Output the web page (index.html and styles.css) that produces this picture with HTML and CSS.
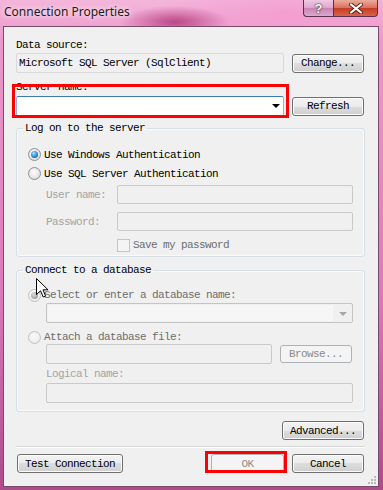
FILE: index.html
```html
<!DOCTYPE html>
<html lang="en">
<head>
  <meta charset="UTF-8">
  <meta name="viewport" content="width=device-width, initial-scale=1.0">
  <title>Connection Properties</title>
  <link rel="stylesheet" href="styles.css">
</head>
<body>
  <div class="window">
    <div class="titlebar">
      <span class="title">Connection Properties</span>
      <div class="caption-btns">
        <span class="cap help">?</span>
        <span class="cap close">
          <svg width="16" height="11" viewBox="0 0 16 11">
            <path d="M3 1.5 L13 9.5 M13 1.5 L3 9.5" stroke="#5a2418" stroke-width="4" stroke-linecap="round"/>
            <path d="M3 1.5 L13 9.5 M13 1.5 L3 9.5" stroke="#fff" stroke-width="2.2" stroke-linecap="round"/>
          </svg>
        </span>
      </div>
    </div>

    <div class="client">
      <div class="label">Data source:</div>
      <div class="row first">
        <div class="textbox readonly wide">Microsoft SQL Server (SqlClient)</div>
        <button class="btn">Change...</button>
      </div>

      <div class="label spaced">Server name:</div>
      <div class="row second">
        <div class="combo active wide"><span class="arrow"></span></div>
        <button class="btn">Refresh</button>
      </div>

      <fieldset class="group logon">
        <legend>Log on to the server</legend>
        <div class="opt">
          <span class="radio checked"></span>
          <span>Use Windows Authentication</span>
        </div>
        <div class="opt">
          <span class="radio"></span>
          <span>Use SQL Server Authentication</span>
        </div>
        <div class="field">
          <span class="field-label">User name:</span>
          <div class="textbox disabled field-box"></div>
        </div>
        <div class="field pass">
          <span class="field-label">Password:</span>
          <div class="textbox disabled field-box"></div>
        </div>
        <div class="check-row">
          <span class="checkbox"></span>
          <span>Save my password</span>
        </div>
      </fieldset>

      <fieldset class="group database">
        <legend>Connect to a database</legend>
        <div class="opt small dim">
          <span class="radio checked disabled"></span>
          <span>Select or enter a database name:</span>
        </div>
        <div class="combo disabled db-combo"><span class="combo-fill"></span><span class="arrow"></span></div>
        <div class="opt small dim attach-opt">
          <span class="radio disabled"></span>
          <span>Attach a database file:</span>
        </div>
        <div class="row indent">
          <div class="textbox disabled file-box"></div>
          <button class="btn disabled browse">Browse...</button>
        </div>
        <div class="label faint indent logical">Logical name:</div>
        <div class="textbox disabled indent logical-box"></div>
      </fieldset>

      <div class="actions">
        <button class="btn advanced">Advanced...</button>
      </div>

      <div class="sep"></div>

      <div class="footer">
        <button class="btn test">Test Connection</button>
        <button class="btn disabled ok">OK</button>
        <button class="btn">Cancel</button>
      </div>

      <!-- annotation boxes + cursor drawn over the dialog -->
      <div class="mark mark-server"></div>
      <div class="mark mark-ok"></div>
      <svg class="cursor" width="13" height="20" viewBox="0 0 13 20">
        <path d="M0.5 0.5 L0.5 16.5 L4.5 12.8 L7.2 19 L9.6 18 L7 11.8 L12 11.8 Z" fill="#fff" stroke="#000" stroke-width="1"/>
      </svg>
      <svg class="grip" width="9" height="9" viewBox="0 0 9 9">
        <rect x="6" y="0" width="2" height="2" fill="#b8b8b8"/>
        <rect x="3" y="3" width="2" height="2" fill="#b8b8b8"/>
        <rect x="6" y="3" width="2" height="2" fill="#b8b8b8"/>
        <rect x="0" y="6" width="2" height="2" fill="#b8b8b8"/>
        <rect x="3" y="6" width="2" height="2" fill="#b8b8b8"/>
        <rect x="6" y="6" width="2" height="2" fill="#b8b8b8"/>
      </svg>
    </div>
  </div>
</body>
</html>
```

FILE: styles.css
```css
* {
  box-sizing: border-box;
}

body {
  margin: 0;
  font-family: "Liberation Mono", "DejaVu Sans Mono", monospace;
  font-size: 11px;
  letter-spacing: -0.6px;
  color: #000;
}

.window {
  width: 383px;
  height: 490px;
  padding: 0 4px 3px 3px;
  display: flex;
  flex-direction: column;
  background:
    radial-gradient(ellipse 55px 16px at 175px 22px, rgba(170, 40, 110, 0.75), transparent),
    radial-gradient(ellipse 140px 30px at 290px 12px, rgba(245, 150, 205, 0.6), transparent),
    linear-gradient(to bottom, #f3b6da 0, #ec98cc 40px, #dc78b8 300px, #b04a8a 100%);
}

.titlebar {
  height: 26px;
  display: flex;
  justify-content: space-between;
  align-items: flex-start;
}

.title {
  font-family: "Noto Sans", sans-serif;
  font-size: 12px;
  letter-spacing: 0;
  line-height: 16px;
  margin: 4px 0 0 1px;
  color: #1c1c1c;
  text-shadow: 0 0 5px rgba(255, 255, 255, 0.9), 0 0 9px rgba(255, 255, 255, 0.6);
}

.caption-btns {
  display: flex;
  margin-right: 1px;
}

.cap {
  height: 17px;
  display: flex;
  align-items: center;
  justify-content: center;
  border: 1px solid #5a2e4e;
  border-top: none;
}

.help {
  width: 30px;
  border-right: none;
  border-radius: 0 0 0 4px;
  background: linear-gradient(#efc8e2, #dca6cc 50%, #c882b2 50%, #dbaacd);
  font-family: "Liberation Sans", sans-serif;
  font-weight: bold;
  font-size: 13px;
  letter-spacing: 0;
  color: #fff;
  text-shadow: 0 0 1px #3a1a30, 0 0 2px #3a1a30;
}

.close {
  width: 45px;
  border-radius: 0 0 4px 0;
  background: linear-gradient(#eaab9c, #d8705c 50%, #c33b22 50%, #d9644a);
}

.client {
  flex: 1;
  position: relative;
  background: #f0f0f0;
  border: 1px solid #7a4a6e;
  padding: 11px 13px 0 12px;
}

.label {
  height: 14px;
  line-height: 14px;
  white-space: nowrap;
}

.label.spaced {
  margin-top: 7px;
}

.row {
  display: flex;
  align-items: center;
  gap: 8px;
}

.row.first {
  margin-top: 1px;
}

.row.second {
  margin-top: 2px;
}

.textbox {
  height: 20px;
  line-height: 18px;
  padding: 0 2px;
  border: 1px solid #abadb3;
  border-radius: 2px;
  background: #fff;
  white-space: nowrap;
}

.textbox.readonly {
  background: #f0f0f0;
  border-color: #d9d9d9;
}

.textbox.disabled {
  background: #f0f0f0;
  border-color: #c9c9c9;
}

.wide {
  width: 268px;
}

.combo {
  height: 20px;
  border: 1px solid #abadb3;
  border-radius: 2px;
  display: flex;
  align-items: center;
  justify-content: flex-end;
  padding-right: 3px;
}

.combo.active {
  background: #fff;
  border-color: #7eb4ea;
  border-top-color: #3d7bad;
}

.arrow {
  width: 0;
  height: 0;
  border-left: 4px solid transparent;
  border-right: 4px solid transparent;
  border-top: 4px solid #000;
}

.combo.disabled {
  background: #f0f0f0;
  border-color: #c4c4c4;
  padding: 1px 5px 1px 1px;
  justify-content: space-between;
  align-items: stretch;
}

.combo.disabled .arrow {
  border-top-color: #a6a6a6;
  align-self: center;
  margin-top: 1px;
}

.combo-fill {
  width: 285px;
  background: #f6f6f6;
}

.btn {
  font: inherit;
  letter-spacing: inherit;
  color: #000;
  width: 72px;
  height: 19px;
  padding: 0;
  border: 1px solid #707070;
  border-radius: 3px;
  background: linear-gradient(#f3f3f3 0, #ebebeb 50%, #dddddd 50%, #cfcfcf 100%);
  box-shadow: inset 0 0 0 1px #fbfbfb;
}

.btn.disabled {
  border-color: #adb2b5;
  background: #f4f4f4;
  box-shadow: none;
  color: #8a8a8a;
}

.group {
  margin: 5px 0 0;
  padding: 10px 11px 4px;
  min-width: 0;
  border: 1px solid #d5dfe5;
  border-radius: 3px;
  box-shadow: inset 0 0 0 1px #fafafa;
}

.group legend {
  padding: 0 2px;
  margin-left: -5px;
  line-height: 14px;
}

.group.database {
  margin-top: 6px;
  padding: 11px 11px 8px;
}

.opt {
  display: flex;
  align-items: center;
  gap: 3px;
  height: 19px;
  white-space: nowrap;
}

.opt.small {
  height: 14px;
}

.dim {
  color: #6d6d6d;
}

.faint {
  color: #a3a3a3;
}

.radio {
  position: relative;
  width: 13px;
  height: 13px;
  flex: none;
  border-radius: 50%;
  border: 1px solid #8f9091;
  background: radial-gradient(circle at 45% 40%, #ffffff, #e6e6e6 55%, #cfcfcf);
}

.radio.checked::after {
  content: "";
  position: absolute;
  left: 2px;
  top: 2px;
  width: 7px;
  height: 7px;
  border-radius: 50%;
  background: radial-gradient(circle at 40% 35%, #a8e4ff, #2b86cf 55%, #0b3f78);
}

.radio.disabled {
  border-color: #c2c2c2;
  background: radial-gradient(circle at 45% 40%, #fbfbfb, #eeeeee 60%, #e0e0e0);
}

.radio.disabled.checked::after {
  background: radial-gradient(circle at 40% 35%, #dcdcdc, #a9a9a9 60%, #8d8d8d);
}

.field {
  display: flex;
  align-items: center;
  margin: 2px 0 0 18px;
}

.field.pass {
  margin-top: 8px;
}

.field-label {
  width: 71px;
  color: #a3a3a3;
  white-space: nowrap;
}

.field-box {
  width: 236px;
  height: 19px;
}

.check-row {
  display: flex;
  align-items: center;
  gap: 3px;
  height: 14px;
  margin: 7px 0 0 89px;
  color: #6d6d6d;
}

.checkbox {
  width: 13px;
  height: 13px;
  border: 1px solid #c4c4c4;
  background: #f4f4f4;
}

.indent {
  margin-left: 18px;
}

.db-combo {
  width: 307px;
  margin: 1px 0 0 18px;
}

.attach-opt {
  margin-top: 7px;
}

.file-box {
  width: 226px;
}

.browse {
  height: 18px;
}

.logical {
  margin-top: 3px;
}

.logical-box {
  width: 307px;
  margin-top: 2px;
}

.actions {
  display: flex;
  justify-content: flex-end;
  padding-right: 1px;
  margin-top: 9px;
}

.advanced {
  width: 82px;
}

.sep {
  height: 2px;
  margin-top: 6px;
  border-top: 1px solid #d5d5d5;
  border-bottom: 1px solid #ffffff;
}

.footer {
  display: flex;
  gap: 8px;
  margin-top: 6px;
  padding: 0 1px;
}

.test {
  width: 106px;
  margin-right: auto;
}

.ok {
  width: 73px;
}

.mark {
  position: absolute;
  border: 3px solid #ff0000;
  pointer-events: none;
}

.mark-server {
  left: 8px;
  top: 57px;
  width: 277px;
  height: 34px;
}

.mark-ok {
  left: 201px;
  top: 424px;
  width: 82px;
  height: 22px;
}

.cursor {
  position: absolute;
  left: 32px;
  top: 251px;
}

.grip {
  position: absolute;
  right: 1px;
  bottom: 1px;
}
```
